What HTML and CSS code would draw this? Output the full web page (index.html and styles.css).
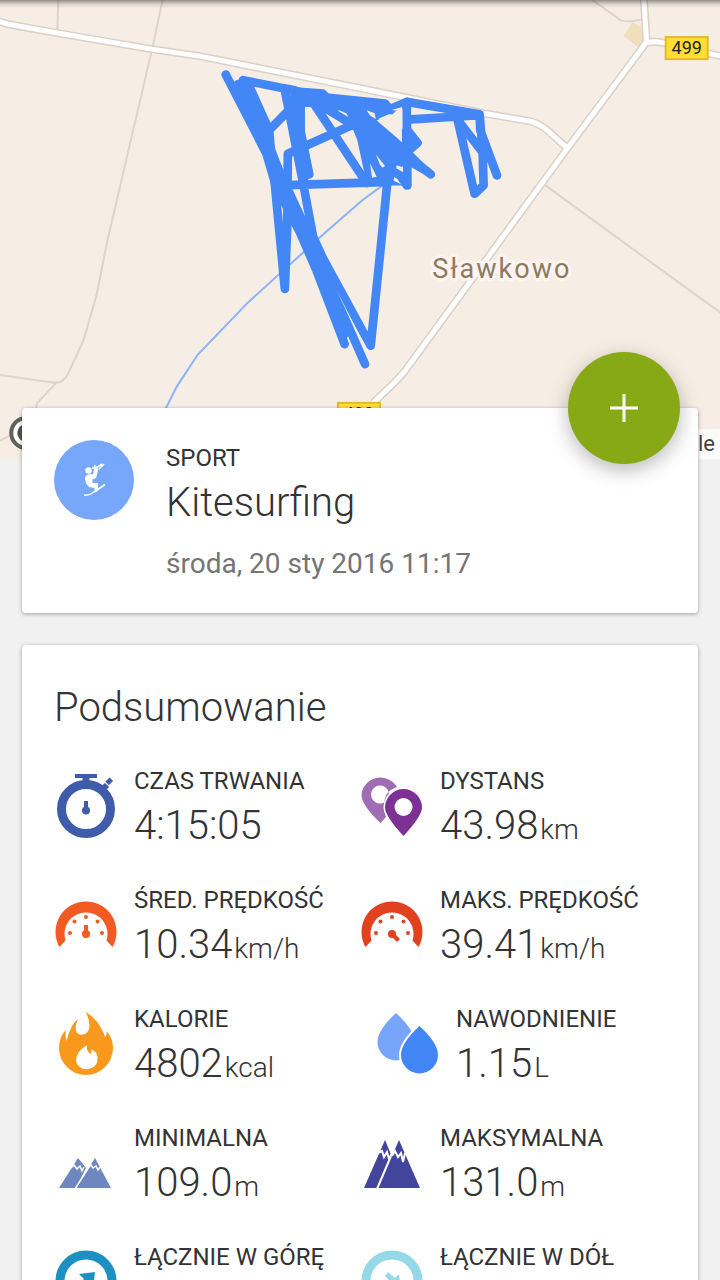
FILE: index.html
```html
<!DOCTYPE html>
<html lang="pl">
<head>
<meta charset="utf-8">
<meta name="viewport" content="width=device-width, initial-scale=1">
<title>Kitesurfing</title>
<link rel="stylesheet" href="styles.css">
</head>
<body>
<main class="screen">
  <section class="map" aria-label="Mapa trasy">
    <svg class="map-canvas" viewBox="0 0 720 458" preserveAspectRatio="xMidYMid slice">
      <path class="field" d="M632 22L644 30L643 40L637 47L623 36Z"/>
      <g class="track">
        <path d="M59 0L58 31M163 0L153 47L108 240L97 295L84 340L70 370Q66 382 55 382L0 374M57 382L38 402L36 410M0 440L12 434"/>
        <path d="M592 0L620 20Q626 23 643 19M545 185L703 300L720 312"/>
      </g>
      <path class="river" d="M384 184L362 200L322 235L248 302L198 354L177 386L165 410"/>
      <g class="road-edge">
        <path id="road" d="M-4 20L8 24L58 33L152 49L200 56L360 88L483 113L530 121Q540 124 548 131L567 148M643 -4L646 42L567 148L405 370Q399 378 373 402M640 50L644 44Q648 40 664 43L724 57"/>
      </g>
      <use class="road" href="#road"/>
      <g class="route" transform="translate(200 50) scale(.33333)">
        <path d="M78 73L200 310L228 405L300 545L350 660L434 880M115 102L205 290L330 560L400 740M130 90L212 300L240 370L280 460L355 620L495 940M125 110L200 250"/>
        <path d="M130 90L240 112L270 117L300 125L368 130L380 142L555 160L572 180M145 100L208 240L262 185M208 240L214 310L225 400L255 715L262 530L264 310L455 225L620 155"/>
        <path d="M255 120L310 400L340 560L370 625L512 885L562 395M283 120L300 270L312 390M300 130L302 250L328 372M240 405L545 395M345 165L500 398M370 170L460 225"/>
        <path d="M620 155L838 192L840 240L890 375M838 192L847 300L850 405L823 430L772 208L850 310M620 208L838 195M620 155L622 405M622 240L652 278L612 312M590 290L692 372M540 340L600 375L620 405"/>
        <path class="mass" d="M110 100L152 108L205 230L228 300L258 380L272 415L340 555L382 625L408 715L450 850L434 870L330 620L300 550L262 490L236 410L200 310Z"/>
        <path class="mass" d="M276 120L315 130L315 240L340 370L325 385L298 390Z"/>
        <path class="mass" d="M300 120L380 140L560 150L580 178L535 205L605 275L625 310L632 330L605 350L590 345L580 390L610 405L565 405L500 400L472 270L440 190L418 180L395 190L372 178L345 170L305 170Z"/>
        <path class="mass" d="M605 235L636 242L660 276L638 306L696 365L685 380L636 352L605 345Z"/>
        <path class="gap" d="M500 180L524 189L527 206L510 196ZM530 211L570 192L605 238L605 276L588 260ZM575 179L606 170L606 184ZM528 313L555 347L548 352L540 344ZM510 339L530 379L516 382ZM601 352L607 354L607 360ZM408 715L465 827L478 862Z"/>
      </g>
      <text class="place" x="432" y="277">Sławkowo</text>
      <g class="shield">
        <rect x="665" y="37" width="42" height="22"/>
        <text x="686" y="54">499</text>
        <rect x="338" y="402" width="42" height="22"/>
        <text x="359" y="419">499</text>
      </g>
      <circle class="pin-ring" cx="27" cy="432" r="15"/>
      <circle class="pin-dot" cx="27" cy="432" r="9"/>
    </svg>
    <span class="attribution">Google</span>
  </section>

  <div class="cards">
    <section class="card sport">
      <button class="add" type="button" aria-label="Dodaj">
        <svg viewBox="0 0 28 28"><path d="M14 0V28M0 14H28" stroke="#fff" stroke-width="3"/></svg>
      </button>
      <div class="sport-badge">
        <svg viewBox="-2 0 24 34">
          <circle cx="4.500" cy="7.500" r="3.200" fill="#fff"/>
          <path d="M1 14Q3 11 7 11L9 11.500L10 6L14.500 6L12 15L8.500 16.500L8.500 20L14 20L14 28L10.500 29L10.500 25L5 24Q1 21 1 14Z" fill="#fff"/>
          <path d="M8 5L14 5M10 6L11 2M12 5L18 1M15 6L20 1M0 32Q5 33 10 29L21 21.500" fill="none" stroke="#fff" stroke-width="1.600"/>
        </svg>
      </div>
      <div class="sport-text">
        <p class="label">SPORT</p>
        <h1 class="title">Kitesurfing</h1>
        <p class="date">środa, 20 sty 2016 11:17</p>
      </div>
    </section>

    <section class="card summary">
      <h2 class="title">Podsumowanie</h2>
      <dl class="stats">
        <div class="stat">
          <svg class="icon" viewBox="0 0 64 64"><g fill="none" stroke="#3f5caa"><circle cx="32" cy="35" r="24.500" stroke-width="9"/><path d="M21 2H43" stroke-width="4"/><path d="M32 3V10" stroke-width="7"/><path d="M47 17L53 11" stroke-width="6"/><path d="M53.500 9L57 5.500" stroke-width="6" transform="rotate(90 55.250 7.250)"/><path d="M32 27V36" stroke-width="4"/></g><circle cx="32" cy="36.500" r="4" fill="#3f5caa"/></svg>
          <dt class="label">CZAS TRWANIA</dt>
          <dd class="value">4:15:05</dd>
        </div>
        <div class="stat">
          <svg class="icon" viewBox="0 0 64 64"><path fill="#a06cb3" fill-rule="evenodd" d="M20.500 49Q1.500 31 1.500 21A19 18.500 0 0 1 37 13Q24 17 24 31Q24 38 26 43ZM20 11.500a9 9 0 1 0 .01 0Z"/><path fill="#7d3195" stroke="#fff" stroke-width="3" paint-order="stroke" d="M43.500 62Q25 42 25 33.500A18.500 18.500 0 0 1 62 33.500Q62 42 43.500 62Z"/><circle cx="43.500" cy="33" r="9" fill="#fff"/></svg>
          <dt class="label">DYSTANS</dt>
          <dd class="value">43.98<span class="unit">km</span></dd>
        </div>
        <div class="stat">
          <svg class="icon" viewBox="0 0 64 64"><g fill="#f25a24"><path d="M5.500 54A30.500 30.500 0 1 1 58.500 54L52.500 47.500A21.500 21.500 0 1 0 11.500 47.500Z"/><circle cx="16" cy="40" r="2"/><circle cx="20.500" cy="28.500" r="2"/><circle cx="32" cy="24" r="2"/><circle cx="43.500" cy="28.500" r="2"/><circle cx="48" cy="40" r="2"/><circle cx="32" cy="41" r="4"/><path d="M30 32H34V41H30Z"/></g></svg>
          <dt class="label">ŚRED. PRĘDKOŚĆ</dt>
          <dd class="value">10.34<span class="unit">km/h</span></dd>
        </div>
        <div class="stat">
          <svg class="icon" viewBox="0 0 64 64"><g fill="#e2411f"><path d="M5.500 54A30.500 30.500 0 1 1 58.500 54L52.500 47.500A21.500 21.500 0 1 0 11.500 47.500Z"/><circle cx="16" cy="40" r="2"/><circle cx="20.500" cy="28.500" r="2"/><circle cx="32" cy="24" r="2"/><circle cx="43.500" cy="28.500" r="2"/><circle cx="48" cy="40" r="2"/><circle cx="32" cy="41" r="4"/><path d="M30.500 42.500L33.500 39.500L40 46L37 49Z"/></g></svg>
          <dt class="label">MAKS. PRĘDKOŚĆ</dt>
          <dd class="value">39.41<span class="unit">km/h</span></dd>
        </div>
        <div class="stat">
          <svg class="icon" viewBox="0 0 64 64"><path fill="#f8981d" d="M31.500 0Q42 6 47 16Q50 21 51 25Q53 23 52.500 19Q59 26 59 36A27 27 0 0 1 5 36Q5 25 12 18Q11 25 12.500 29Q14 22 18 14Q20 10 24 7Q20 16 23 21Q26 24 31 22Q36 19 35.500 13Q35 6 31.500 0Z"/><path fill="#fff" d="M33 33Q22 40 22 48A10.500 9.500 0 0 0 43.500 47Q44 40 37 37Q38 41 36.500 42Q32 39 33 33Z"/></svg>
          <dt class="label">KALORIE</dt>
          <dd class="value">4802<span class="unit">kcal</span></dd>
        </div>
        <div class="stat stat-inset">
          <svg class="icon" viewBox="0 0 64 64"><path fill="#76a5fa" d="M20 1Q38.500 18 38.500 30A18.500 18.500 0 0 1 1.500 30Q1.500 18 20 1Z"/><path fill="#4285f4" stroke="#fff" stroke-width="4" paint-order="stroke" d="M43.500 14Q62 31 62 43A18.500 18.500 0 0 1 25 43Q25 31 43.500 14Z"/></svg>
          <dt class="label">NAWODNIENIE</dt>
          <dd class="value">1.15<span class="unit">L</span></dd>
        </div>
        <div class="stat">
          <svg class="icon" viewBox="0 0 64 64"><path fill="#6f87c1" d="M5 57L24 27L32 37L22 57ZM22 57L41 27L57 57Z"/><path fill="none" stroke="#fff" stroke-width="1.500" d="M21 58L35 36M17 37L20 34L23 38L26 35L28 40L30 36M34 37L37 34L39 37L42 35L44 39L46 36"/></svg>
          <dt class="label">MINIMALNA</dt>
          <dd class="value">109.0<span class="unit">m</span></dd>
        </div>
        <div class="stat">
          <svg class="icon" viewBox="0 0 64 64"><path fill="#43459c" d="M4 57L25 9L33 28L18 57ZM18 57L39 9L60 57Z"/><path fill="none" stroke="#fff" stroke-width="2" d="M17 58L31 25M18 22L22 20L24 26L27 21L29 28L32 22M32 25L35 20L38 26L41 22L43 31L45 22"/></svg>
          <dt class="label">MAKSYMALNA</dt>
          <dd class="value">131.0<span class="unit">m</span></dd>
        </div>
        <div class="stat">
          <svg class="icon" viewBox="0 0 64 64"><circle cx="32" cy="31" r="26" fill="none" stroke="#1c90c1" stroke-width="9"/><path fill="#1c90c1" d="M25 24L41 22L39 38L34 33L24 43L20 39L30 29Z"/></svg>
          <dt class="label">ŁĄCZNIE W GÓRĘ</dt>
        </div>
        <div class="stat">
          <svg class="icon" viewBox="0 0 64 64"><circle cx="32" cy="31" r="26" fill="none" stroke="#95d8e8" stroke-width="9"/><path fill="#95d8e8" d="M25 26L28 22L35 28L39 24L41 40L25 38L31 32Z"/></svg>
          <dt class="label">ŁĄCZNIE W DÓŁ</dt>
        </div>
      </dl>
    </section>
  </div>
</main>
</body>
</html>
```
FILE: styles.css
```css
* {
  box-sizing: border-box;
}

body,
h1,
h2,
p,
dl,
dd {
  margin: 0;
}

body {
  background: #f1f1f1;
  color: #333;
  font-family: Roboto, "Noto Sans", sans-serif;
}

.screen {
  height: 100vh;
  overflow-y: auto;
  scrollbar-width: none;
}

.map {
  position: relative;
  height: 459px;
  background: #f6ede4;
  overflow: hidden;
}

.map::before {
  content: "";
  position: absolute;
  inset: 0 0 auto;
  height: 8px;
  background: linear-gradient(rgba(0, 0, 0, 0.4), rgba(0, 0, 0, 0.12) 50%, transparent);
}

.map-canvas {
  display: block;
  width: 100%;
  height: 100%;
}

.field {
  fill: #efdfbb;
}

.track {
  fill: none;
  stroke: #ddd4ca;
  stroke-width: 2;
}

.river {
  fill: none;
  stroke: #8ab4fb;
  stroke-width: 2;
}

.road-edge {
  fill: none;
  stroke: #d9d0c6;
  stroke-width: 8;
}

.road-edge path {
  fill: none;
}

.road {
  stroke: #fff;
  stroke-width: 5;
}

.route {
  fill: none;
  stroke: #4387f6;
  stroke-width: 26;
  stroke-linecap: round;
  stroke-linejoin: round;
}

.mass {
  fill: #4387f6;
  stroke: none;
}

.gap {
  fill: #f6ede4;
  stroke: none;
}

.place {
  fill: #8d7b5a;
  stroke: #fcf3f3;
  stroke-width: 6px;
  stroke-linejoin: round;
  paint-order: stroke;
  font-size: 27px;
  letter-spacing: 2px;
}

.shield rect {
  fill: #ffdf33;
  stroke: #e8b731;
  stroke-width: 2;
}

.shield text {
  fill: #222;
  font-size: 18px;
  text-anchor: middle;
}

.pin-ring {
  fill: #fff;
  stroke: #62615a;
  stroke-width: 4;
}

.pin-dot {
  fill: #55554f;
}

.attribution {
  position: absolute;
  right: 0;
  bottom: 0;
  padding: 0 5px;
  background: rgba(255, 255, 255, 0.8);
  color: #444;
  font-size: 22px;
  line-height: 30px;
}

.cards {
  position: relative;
  display: flex;
  flex-direction: column;
  gap: 32px;
  margin-top: -51px;
  padding: 0 22px 32px;
}

.card {
  position: relative;
  padding: 32px;
  border-radius: 4px;
  background: #fff;
  box-shadow: 0 1px 4px rgba(0, 0, 0, 0.35);
}

.sport {
  display: flex;
  gap: 32px;
}

.add {
  position: absolute;
  top: -56px;
  right: 18px;
  display: grid;
  place-items: center;
  width: 112px;
  height: 112px;
  padding: 0;
  border: 0;
  border-radius: 50%;
  background: #88a916;
  box-shadow: 0 6px 20px rgba(0, 0, 0, 0.28);
}

.add svg {
  width: 28px;
  height: 28px;
}

.sport-badge {
  display: grid;
  place-items: center;
  flex: none;
  width: 80px;
  height: 80px;
  border-radius: 50%;
  background: #76a7fa;
}

.sport-badge svg {
  width: 24px;
  height: 34px;
}

.label {
  font-size: 24px;
  line-height: 28px;
}

.sport .label {
  margin-top: 4px;
}

.title {
  font-size: 40px;
  font-weight: 300;
  line-height: 62px;
}

.date {
  padding-top: 13px;
  color: #757575;
  font-size: 28px;
  line-height: 34px;
}

.summary .title {
  margin-bottom: 28px;
}

.stats {
  display: grid;
  grid-template-columns: 1fr 1fr;
  row-gap: 35px;
}

.stat {
  display: grid;
  grid-template-columns: 64px 1fr;
  grid-template-rows: 28px 56px;
  column-gap: 16px;
}

.stat-inset {
  padding-left: 16px;
}

.icon {
  grid-row: 1 / 3;
  width: 64px;
  height: 64px;
  margin-top: 7px;
}

.value {
  font-size: 40px;
  font-weight: 300;
  line-height: 62px;
}

.unit {
  margin-left: 2px;
  font-size: 28px;
}
```
